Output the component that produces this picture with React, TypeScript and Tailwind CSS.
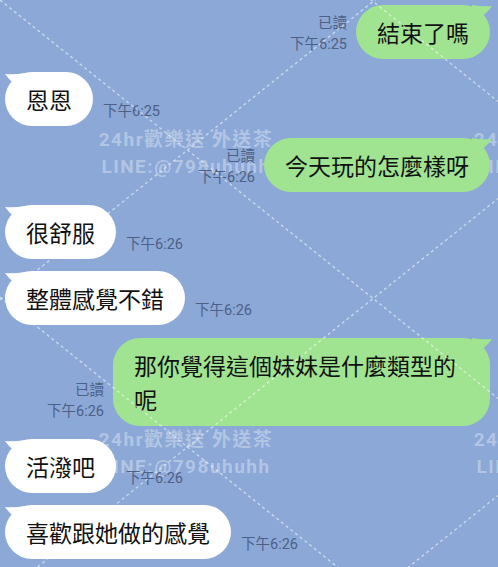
import React from 'react';

type Msg = { side: 'me' | 'them'; text: string; time: string; read?: boolean };

const messages: Msg[] = [
  { side: 'me', text: '結束了嗎', time: '下午6:25', read: true },
  { side: 'them', text: '恩恩', time: '下午6:25' },
  { side: 'me', text: '今天玩的怎麼樣呀', time: '下午6:26', read: true },
  { side: 'them', text: '很舒服', time: '下午6:26' },
  { side: 'them', text: '整體感覺不錯', time: '下午6:26' },
  { side: 'me', text: '那你覺得這個妹妹是什麼類型的呢', time: '下午6:26', read: true },
  { side: 'them', text: '活潑吧', time: '下午6:26' },
  { side: 'them', text: '喜歡跟她做的感覺', time: '下午6:26' },
];

const font = { fontFamily: '"Noto Sans CJK TC", "Noto Sans", sans-serif' };
const metaFont = { fontFamily: 'Roboto, "Noto Sans CJK TC", sans-serif' };

// watermark tiles (behind the bubbles)
const marks = [
  [86, 126],
  [461, 126],
  [86, 426],
  [461, 426],
];

const Watermark = ({ left, top }: { left: number; top: number }) => (
  <div
    className="absolute w-[200px] text-center text-[19px] leading-[27px] font-bold tracking-[1.5px] text-white/35 whitespace-nowrap"
    style={{ left, top, ...metaFont }}
  >
    <div>24hr歡樂送 外送茶</div>
    <div>LINE:@798uhuhh</div>
  </div>
);

const DashLines = () => {
  const downRight = [-297, 0, 297, 594];
  const downLeft = [300, 597, 894];
  return (
    <svg className="absolute inset-0 pointer-events-none" width="498" height="567">
      <g stroke="white" strokeOpacity="0.55" strokeWidth="1.4" strokeDasharray="3 3" fill="none">
        {downRight.map(c => (
          <line key={'r' + c} x1="0" y1={c} x2="498" y2={c + 0.8 * 498} />
        ))}
        {downLeft.map(d => (
          <line key={'l' + d} x1="0" y1={d} x2="498" y2={d - 0.8 * 498} />
        ))}
      </g>
    </svg>
  );
};

const Meta = ({ msg }: { msg: Msg }) => (
  <div
    className={`mb-[4px] shrink-0 text-[14.5px] leading-[21px] text-[#4d6186] ${msg.side === 'me' ? 'text-right' : ''}`}
    style={metaFont}
  >
    {msg.read && <div>已讀</div>}
    <div>{msg.time}</div>
  </div>
);

const Bubble = ({ msg }: { msg: Msg }) => {
  const mine = msg.side === 'me';
  return (
    <div
      className={`relative max-w-[377px] rounded-[27px] px-[21px] py-[10px] text-[23px] leading-[34px] text-[#111] ${
        mine ? 'bg-[#a0e391]' : 'bg-white'
      }`}
      style={font}
    >
      {mine ? (
        <svg className="absolute right-[-2px] top-0" width="22" height="20" viewBox="0 0 22 20">
          <path d="M22 1 Q 12 2 2 0 L 2 18 Q 15 11 22 1 Z" fill="#a0e391" />
        </svg>
      ) : (
        <svg className="absolute left-0 top-[1px]" width="22" height="20" viewBox="0 0 22 20">
          <path d="M0 1 Q 9 2 20 0 L 20 18 Q 7 11 0 1 Z" fill="white" />
        </svg>
      )}
      <span className="relative">{msg.text}</span>
    </div>
  );
};

export default function App() {
  return (
    <div className="relative w-[498px] h-[567px] overflow-hidden bg-[#8ba8d6]">
      {marks.map(([l, t]) => (
        <Watermark key={`${l}-${t}`} left={l} top={t} />
      ))}

      <div className="relative flex flex-col gap-[12.6px] pt-[5px] pl-[5px] pr-[8px]">
        {messages.map((m, i) =>
          m.side === 'me' ? (
            <div key={i} className="flex items-end justify-end gap-[9px]">
              <Meta msg={m} />
              <Bubble msg={m} />
            </div>
          ) : (
            <div key={i} className="flex items-end gap-[10px]">
              <Bubble msg={m} />
              <Meta msg={m} />
            </div>
          )
        )}
      </div>

      <DashLines />
    </div>
  );
}
